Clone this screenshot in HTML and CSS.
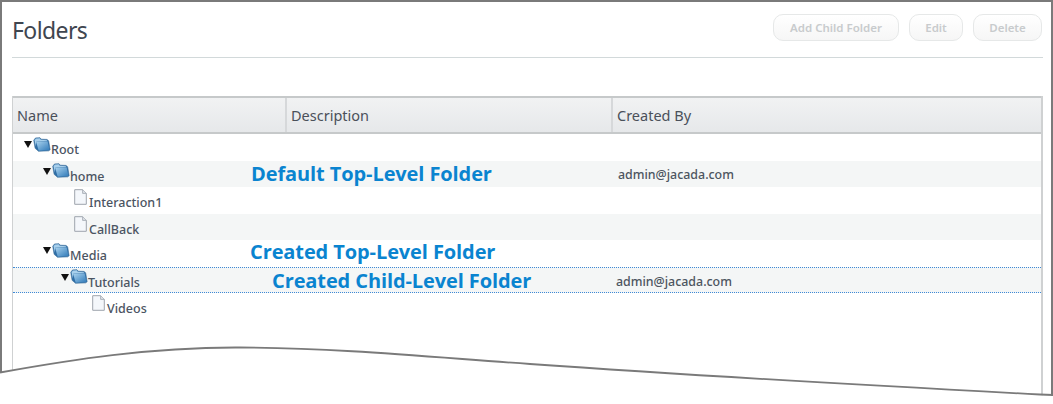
FILE: index.html
```html
<!DOCTYPE html>
<html lang="en">
<head>
<meta charset="utf-8">
<title>Folders</title>
<link rel="stylesheet" href="styles.css">
</head>
<body>
<svg width="0" height="0" class="defs">
  <defs>
    <linearGradient id="fold" x1="0" y1="0" x2="1" y2="1">
      <stop offset="0" stop-color="#a9d2ee"/>
      <stop offset="1" stop-color="#2f79b8"/>
    </linearGradient>
    <symbol id="folder" viewBox="0 0 17 14">
      <path d="M.7 3 L2.4 .8 L6.6 .6 L7.800 2 L13.400 2.200 L14.800 3.600 L16.200 12 L14.800 13 L5.200 13.400 L2 10.600 Z" fill="#2f6ea6" stroke="#3c6f9c" stroke-width=".6"/>
      <path d="M1.4 3 L2.800 1.300 L6.400 1.200 L7.400 2.600 L13 2.900 L13.600 4 L3 4.400 L2.800 9 Z" fill="#a8d0ec"/>
      <path d="M3 4.600 L13.800 4.200 L15.600 12.200 L5.400 12.800 Z" fill="url(#fold)"/>
    </symbol>
    <symbol id="file" viewBox="0 0 13 16">
      <path d="M.7.7 H8.6 L12.3 4.4 V15.300 H.7 Z" fill="#f4f7fb" stroke="#9ea4ad" stroke-width="1"/>
      <path d="M8.6.7 V4.4 H12.3" fill="#dfe3e8" stroke="#9ea4ad" stroke-width=".8"/>
    </symbol>
  </defs>
</svg>
<main class="frame">
  <header class="top">
    <h1 class="title">Folders</h1>
    <div class="actions">
      <button class="btn btn-add">Add Child Folder</button>
      <button class="btn btn-edit">Edit</button>
      <button class="btn btn-delete">Delete</button>
    </div>
  </header>
  <section class="grid">
    <div class="row head">
      <div class="col col-name">Name</div>
      <div class="col col-desc">Description</div>
      <div class="col col-by">Created By</div>
    </div>
    <div class="row">
      <div class="tree lvl0"><span class="tw"></span><svg class="ic-folder"><use href="#folder"/></svg><span class="lbl">Root</span></div>
    </div>
    <div class="row alt">
      <div class="tree lvl1"><span class="tw"></span><svg class="ic-folder"><use href="#folder"/></svg><span class="lbl">home</span></div>
      <span class="note note-a">Default Top-Level Folder</span>
      <span class="by by-a">admin@jacada.com</span>
    </div>
    <div class="row">
      <div class="tree lvl2"><svg class="ic-file"><use href="#file"/></svg><span class="lbl">Interaction1</span></div>
    </div>
    <div class="row alt">
      <div class="tree lvl2"><svg class="ic-file"><use href="#file"/></svg><span class="lbl">CallBack</span></div>
    </div>
    <div class="row">
      <div class="tree lvl1"><span class="tw"></span><svg class="ic-folder"><use href="#folder"/></svg><span class="lbl">Media</span></div>
      <span class="note note-b">Created Top-Level Folder</span>
    </div>
    <div class="row alt sel">
      <div class="tree lvl3"><span class="tw"></span><svg class="ic-folder"><use href="#folder"/></svg><span class="lbl">Tutorials</span></div>
      <span class="note note-c">Created Child-Level Folder</span>
      <span class="by by-c">admin@jacada.com</span>
    </div>
    <div class="row">
      <div class="tree lvl4"><svg class="ic-file"><use href="#file"/></svg><span class="lbl">Videos</span></div>
    </div>
  </section>
</main>
<svg class="tear" width="1053" height="404" viewBox="0 0 1053 404" aria-hidden="true">
  <path d="M0 373 C70 360 150 347 240 347.500 C340 348 430 357 530 364 C700 376 880 386 1053 396 V404 H0 Z" fill="#fff"/>
  <path d="M0 372.500 C70 360 150 347 240 347.500 C340 348 430 357 530 364 C700 376 880 386 1040 394.500 L1053 395" fill="none" stroke="#7a7a7a" stroke-width="1.800"/>
</svg>
</body>
</html>
```
FILE: styles.css
```css
* { box-sizing: border-box; }
html, body { margin: 0; padding: 0; background: #fff; }
body { width: 1053px; height: 404px; overflow: hidden; position: relative; font-family: "Noto Sans", "Open Sans", sans-serif; }
.defs { position: absolute; }
.frame {
  height: 404px;
  border: solid #7a7a7a;
  border-width: 2px 2px 0 2px;
  padding: 0 8px 0 10px;
}
.top {
  height: 56px;
  border-bottom: 1px solid #d2d9da;
  display: flex;
  justify-content: space-between;
  align-items: flex-start;
}
.title {
  margin: 11px 0 0;
  font-size: 23px;
  line-height: 34px;
  font-weight: 400;
  color: #3f4650;
  letter-spacing: -.6px;
}
.actions { display: flex; margin-top: 12px; margin-right: 1px; }
.btn {
  height: 27px;
  padding: 0;
  border: 1px solid #e6e8e8;
  border-radius: 10px;
  background: linear-gradient(#fff, #f6f6f6);
  color: #c8cbcd;
  font: 600 11.500px "Noto Sans", sans-serif;
}
.btn-add { width: 126px; margin-right: 10px; }
.btn-edit { width: 54px; margin-right: 10px; }
.btn-delete { width: 69px; }
.grid {
  margin-top: 38px;
  border-left: 1px solid #cfd1d2;
  border-right: 2px solid #cfd1d2;
  height: 300px;
  width: 1031px;
}
.row { position: relative; display: flex; height: 26.500px; align-items: center; }
.head {
  height: 38px;
  border-top: 2px solid #c6c9ca;
  border-bottom: 2px solid #c6c9ca;
  background: linear-gradient(#f1f2f3, #e6e8ea);
  color: #4a505a;
  font-size: 14.500px;
}
.col { height: 100%; display: flex; align-items: center; padding-left: 4px; }
.col-name { width: 274px; border-right: 2px solid #d6d8da; }
.col-desc { width: 326px; border-right: 2px solid #d6d8da; }
.col-by { flex: 1; }
.alt { background: #f4f6f6; }
.sel { border-top: 1px dotted #3f8ad6; border-bottom: 1px dotted #3f8ad6; }
.tree { display: flex; align-items: center; color: #4b5462; font-size: 12.500px; font-weight: 500; }
.lvl0 { padding-left: 11px; }
.lvl1 { padding-left: 30px; }
.lvl2 { padding-left: 61px; }
.lvl3 { padding-left: 48px; }
.lvl4 { padding-left: 79px; }
.tw {
  width: 0; height: 0; margin-top: -5px; margin-right: 1px;
  border-left: 4.500px solid transparent;
  border-right: 4.500px solid transparent;
  border-top: 7px solid #111;
}
.ic-folder { width: 18px; height: 15px; margin-top: -6px; }
.ic-file { width: 13px; height: 16px; margin-top: -6px; margin-right: 2px; }
.lbl { margin-top: 5px; }
.note {
  position: absolute;
  font-family: "Open Sans", sans-serif;
  font-weight: 700;
  font-size: 20px;
  color: #0a84d0;
  white-space: nowrap;
  letter-spacing: -.1px;
}
.note-a { left: 238px; top: -1px; }
.note-b { left: 237px; top: -2px; }
.note-c { left: 259px; top: -1px; }
.by { position: absolute; font-size: 12.400px; font-weight: 500; color: #4d5560; }
.by-a { left: 605px; top: 5px; }
.by-c { left: 603px; top: 5px; }
.tear { position: absolute; left: 0; top: 0; }
```
